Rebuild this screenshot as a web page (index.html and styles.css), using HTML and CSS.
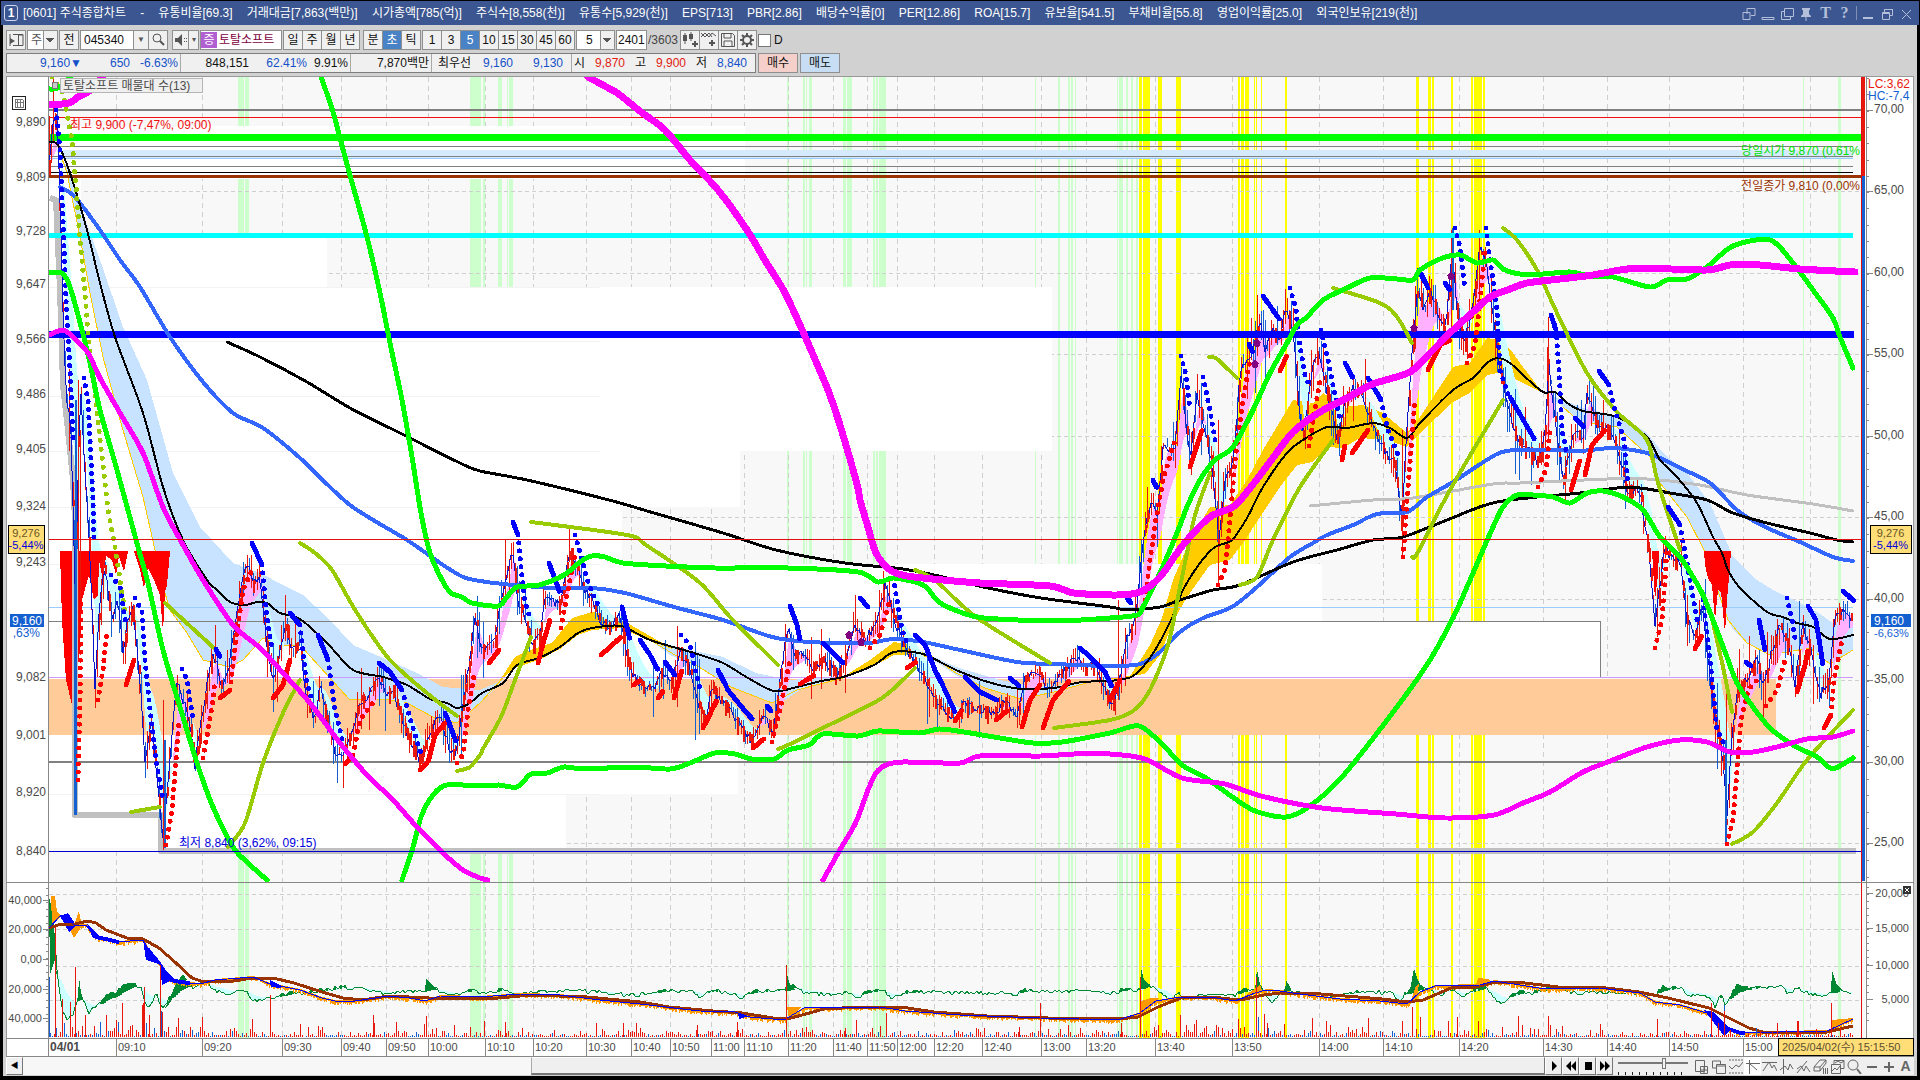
FILE: index.html
```html
<!DOCTYPE html>
<html lang="ko">
<head>
<meta charset="utf-8">
<title>[0601] 주식종합차트</title>
<link rel="stylesheet" href="styles.css">
</head>
<body>
<header class="titlebar">
  <span class="badge">1</span>
  <h1 class="info"><span>[0601] 주식종합차트</span><span>-</span><span>유통비율[69.3]</span><span>거래대금[7,863(백만)]</span><span>시가총액[785(억)]</span><span>주식수[8,558(천)]</span><span>유통수[5,929(천)]</span><span>EPS[713]</span><span>PBR[2.86]</span><span>배당수익률[0]</span><span>PER[12.86]</span><span>ROA[15.7]</span><span>유보율[541.5]</span><span>부채비율[55.8]</span><span>영업이익률[25.0]</span><span>외국인보유[219(천)]</span></h1>
  <div class="winbtns">
    <button aria-label="화면 복사"><svg width="14" height="14"><path d="M5 7V1.5h8v7H9M1 5.5h7v7H1z"/></svg></button>
    <button aria-label="숨기기"><svg width="14" height="14"><path d="M1 10.5h12v2H1z"/></svg></button>
    <button aria-label="창 분리"><svg width="14" height="14"><path d="M4.500 1.500h9v8h-9zM4 4.500H1.500v8h9V10"/></svg></button>
    <button aria-label="고정"><svg width="14" height="14"><path class="solid" d="M3 1h8v2h-1v4l2 2v1H2V9l2-2V3H3zM6.500 10h1v4h-1z"/></svg></button>
    <button class="serif" aria-label="글꼴">T</button>
    <button class="serif" aria-label="도움말">?</button>
    <i class="sep"></i>
    <button aria-label="최소화"><svg width="14" height="14"><path class="solid" d="M2 10h10v2H2z"/></svg></button>
    <button aria-label="이전 크기"><svg width="14" height="14"><path d="M4.500 5V2.500h8v6H10M4 2.500h9M2.500 5.500h7v7h-7zM2 6.500h8"/></svg></button>
    <button aria-label="닫기"><svg width="14" height="14"><path d="M3 3l9 9M12 3l-9 9"/></svg></button>
  </div>
</header>
<main class="client">
  <div class="toolbar">
    <button class="btn" aria-label="목록"><svg width="15" height="14"><path d="M4 1.500h10v11H4M1 1v12M9.500 2v10M9 2h5"/><path class="solid" d="M1 5l5 3-5 3z"/></svg></button>
    <select class="sel kind" aria-label="종류"><option>주</option></select>
    <button class="btn all">전</button>
    <span class="join"><input class="code" value="045340" aria-label="종목코드"><button class="btn caret" aria-label="종목 목록">▼</button><button class="btn" aria-label="검색"><svg width="14" height="14"><circle cx="6" cy="5" r="4"/><path class="bold" d="M9 8l4 4"/></svg></button></span>
    <span class="join speaker"><button class="btn spk" aria-label="소리"><svg width="12" height="12"><path class="solid" d="M0 4h3l4-4v12L3 8H0z"/><path d="M9.500 4v1M9.500 7v1M11.500 4v1M11.500 7v1"/></svg></button><button class="btn tiny" aria-label="소리 설정">▾</button></span>
    <span class="stock"><b>증</b>토탈소프트</span>
    <span class="join"><button class="btn">일</button><button class="btn">주</button><button class="btn">월</button><button class="btn">년</button></span>
    <span class="join unit"><button class="btn">분</button><button class="btn on">초</button><button class="btn">틱</button></span>
    <span class="join"><button class="btn">1</button><button class="btn">3</button><button class="btn on">5</button><button class="btn">10</button><button class="btn">15</button><button class="btn">30</button><button class="btn">45</button><button class="btn">60</button></span>
    <select class="sel num" aria-label="주기"><option>5</option></select>
    <input class="count" value="2401" aria-label="봉 개수">
    <span class="total">/3603</span>
    <span class="join"><button class="btn" aria-label="차트 유형"><svg width="16" height="16"><path class="solid" d="M1 3h4v6H1zM2.500 1h1v11h-1zM7 2h4v5H7zM8.500 0h1v9h-1zM12 9h2v2h2v2h-2v2h-2v-2h-2v-2h2z"/></svg></button><button class="btn" aria-label="지표 추가"><svg width="16" height="16"><path d="M0 5l4-4 4 4 3-4 4 3M0 1l4 4 4-4 3 4"/><path class="solid" d="M10 8h2v2h2v2h-2v2h-2v-2H8v-2h2z"/></svg></button><button class="btn" aria-label="저장"><svg width="16" height="16"><path d="M1.500 1.500h11l2 2v11h-13zM4 2v4h7V2M4 14V9h8v5"/></svg></button><button class="btn" aria-label="설정"><svg width="16" height="16"><circle class="bold" cx="8" cy="8" r="4"/><path class="bold" d="M8 1v3M8 12v3M1 8h3M12 8h3M3 3l2 2M11 11l2 2M13 3l-2 2M5 11l-2 2"/></svg></button></span>
    <label class="chk"><input type="checkbox">D</label>
  </div>
  <div class="quote">
    <div class="cells">
      <span class="dn">9,160▼</span><span class="dn">650</span><span class="dn end">-6.63%</span>
      <span>848,151</span><span class="dn">62.41%</span><span class="end">9.91%</span>
      <span class="end">7,870백만</span><span>최우선</span><span class="dn">9,160</span><span class="dn">9,130</span><span class="end"></span>
      <span>시</span><span class="up">9,870</span><span>고</span><span class="up">9,900</span><span>저</span><span class="dn">8,840</span>
    </div>
    <button class="trade buy">매수</button><button class="trade sell">매도</button>
  </div>
  <svg class="chart" id="chart" viewBox="6 76 1908 981" role="img" aria-label="토탈소프트 5초 차트"></svg>
  <div class="bottom">
    <button class="step" aria-label="왼쪽">◀</button>
    <div class="track"></div><div class="thumb"></div>
    <div class="play">
      <button class="step" aria-label="재생"><svg width="12" height="12"><path class="k" d="M4 1l5 5-5 5z"/></svg></button><button class="step" aria-label="뒤로"><svg width="12" height="12"><path class="k" d="M6 1v10L1 6zM11 1v10L6 6z"/></svg></button><button class="step" aria-label="정지"><svg width="12" height="12"><path class="k" d="M3 2h7v8H3z"/></svg></button><button class="step" aria-label="앞으로"><svg width="12" height="12"><path class="k" d="M1 1v10l5-5zM6 1v10l5-5z"/></svg></button>
    </div>
    <input class="slider" type="range" min="0" max="10" step="0.1" value="6.7" aria-label="속도">
    <div class="tools">
      <button aria-label="창 추가"><svg width="15" height="15"><path d="M1.500 1.500h9v11h-9zM6.500 7.500h7v7h-7zM10 7v8M6 11h8"/></svg></button><button aria-label="창 복사"><svg width="15" height="15"><path d="M5 9H1.500v-7h8V5M5.500 5.500h9v9h-9zM5 7h10"/></svg></button><button aria-label="범위"><svg width="15" height="15"><path d="M1 1h14M1 14h14" stroke-dasharray="2 1"/><path d="M1 7l3 3 4-4 3 2 4-5"/></svg></button><button class="on" aria-label="십자선"><svg width="15" height="15"><path d="M1 4.500h14M4.500 1v14M5 5l7 6"/></svg></button><button aria-label="추세선"><svg width="15" height="15"><path d="M0 3.500h15M1 12l6-9 3 6 2-3 3 6"/></svg></button><button aria-label="수직선"><svg width="15" height="15"><path d="M4.500 0v15M1 11l5-4 3 4 2-6 3 5"/></svg></button><button aria-label="선 그리기"><svg width="15" height="15"><path d="M1 14L11 2M1 10l4-3 3 5 2-5 4 6"/></svg></button><button aria-label="모두 지우기"><svg width="15" height="15"><path d="M1 8l6-7h6l-6 7zM1 8v4h6V8M7 12l6-8V1M10.500 9v6M12.500 9v6M14.500 9v6"/></svg></button><button aria-label="차트 이미지"><svg width="15" height="15"><path d="M4 5V1.500h10v8h-3M1.500 5.500h9v9h-9zM2 12l3-3 2 2 3-4M5 4l3-2 3 2 3-2"/></svg></button><button aria-label="확대경"><svg width="15" height="15"><circle cx="6" cy="6" r="5"/><path class="bold" d="M10 10l4 5"/></svg></button><button aria-label="축소"><svg width="15" height="15"><path class="solid" d="M3 7h10v2H3z"/></svg></button><button aria-label="확대"><svg width="15" height="15"><path class="solid" d="M3 7h4V3h2v4h4v2H9v4H7V9H3z"/></svg></button><button class="letter" aria-label="글자">A</button>
    </div>
  </div>
</main>
<script src="chart.js"></script>
</body>
</html>
```
FILE: styles.css
```css
* { box-sizing: border-box; }
body { margin: 0; padding-top: 1px; background: #000; font: 12px/16px "Liberation Sans", "Noto Sans CJK KR", sans-serif; color: #111; }
button, input, select { font: inherit; color: inherit; margin: 0; padding: 0; border-radius: 0; }
svg path, svg circle { fill: none; stroke: currentColor; }
svg .solid { fill: currentColor; stroke: none; }
svg .bold { stroke-width: 2; }

.titlebar { display: flex; align-items: center; height: 24px; margin: 0 1px; padding: 0 5px 0 3px; background: #3b5690; color: #fff; }
.badge { width: 14px; height: 16px; border: 1px solid #cfd8ee; border-radius: 3px; font-weight: bold; line-height: 14px; text-align: center; }
.info { display: flex; justify-content: space-between; width: 73%; margin: 0 0 0 5px; font-size: 12px; font-weight: normal; white-space: nowrap; }
.winbtns { display: flex; align-items: center; gap: 4px; margin-left: auto; color: #b4bfd9; }
.winbtns button { width: 15px; height: 18px; border: 0; background: none; line-height: 18px; }
.winbtns svg { display: block; margin-top: 1px; }
.winbtns .serif { font: bold 16px/18px "Liberation Serif", serif; }
.sep { width: 1px; height: 14px; background: #7f8fb5; }

.client { margin: 0 3px; padding: 5px 3px 1px 3px; background: #d1d1d1; }
.toolbar { display: flex; align-items: center; gap: 1px; height: 20px; }
.btn { display: inline-flex; align-items: center; justify-content: center; width: 20px; height: 20px; flex: none; border: 1px solid #8f8f8f; background: #f0f0f0; }
.btn svg { color: #555; }
.join { display: flex; }
.join .btn + .btn, .join input + .btn { margin-left: -1px; }
.btn.on { background: #4a82c6; color: #fff; }
.caret, .tiny { color: #555; font-size: 8px; }
.btn.caret { width: 16px; }
.btn.spk { width: 17px; }
.btn.tiny { width: 11px; }
.speaker { margin-left: 3px; }
.unit { margin-left: 2px; }
.sel { appearance: none; height: 20px; border: 1px solid #8f8f8f; padding-left: 3px; color: #555; background: linear-gradient(45deg, transparent 50%, #555 50%) right 7px center / 4px 4px no-repeat, linear-gradient(-45deg, transparent 50%, #555 50%) right 3px center / 4px 4px no-repeat, linear-gradient(#8f8f8f, #8f8f8f) right 13px top / 1px 20px no-repeat, linear-gradient(#f0f0f0, #f0f0f0) right / 13px 20px no-repeat, #fff; }
.kind { width: 31px; }
.num { width: 39px; padding-left: 9px; color: #111; }
.code, .count { height: 20px; border: 1px solid #8f8f8f; padding: 0 3px; background: #fff; }
.code { width: 54px; }
.count { width: 31px; padding: 0 1px; }
.stock { display: flex; align-items: center; width: 82px; height: 20px; border: 1px solid #8f8f8f; background: #fff; color: #800040; white-space: nowrap; overflow: hidden; }
.stock b { width: 16px; margin-right: 2px; background: #b060d0; color: #fff; font-weight: normal; text-align: center; flex: none; }
.total { width: 31px; color: #444; }
.chk { display: flex; align-items: center; gap: 3px; }
.chk input { appearance: none; width: 13px; height: 13px; border: 1px solid #777; background: #fff; }

.quote { display: flex; gap: 2px; margin: 3px 0; height: 20px; }
.cells { display: grid; grid-template-columns: 75px 48px 51px 68px 58px 44px 81px 39px 42px 50px 9px 13px 40px 21px 40px 21px 40px; width: 750px; height: 20px; border: 1px solid #7d7d7d; background: #f0f0f0; line-height: 18px; text-align: right; white-space: nowrap; }
.cells .end { border-right: 1px solid #a9a9a9; padding-right: 2px; }
.dn { color: #1450c8; }
.up { color: #e01b10; }
.trade { width: 40px; height: 20px; border: 1px solid #8f8f8f; }
.buy { background: #f5d0cb; }
.sell { background: #c6ddf3; }

.chart { display: block; width: 100%; height: auto; background: #fff; shape-rendering: crispEdges; }
.chart path, .chart polyline, .chart line, .chart polygon, .chart rect { fill: none; stroke: none; stroke-linejoin: round; }
.chart text { fill: #4a4a4a; font-size: 12px; }
.chart .time { font-size: 11px; }
.chart .bold-text { font-weight: bold; }

.bottom { display: flex; align-items: center; height: 18px; background: #efefef; }
.step { display: flex; align-items: center; justify-content: center; flex: none; width: 17px; height: 18px; border: 1px solid; border-color: #fff #777 #777 #fff; background: #efefef; font-size: 8px; color: #000; }
svg .k { fill: #000; stroke: none; }
.track { flex: 508 1 0; height: 18px; background: #f7f7f7; }
.thumb { flex: 1012 1 0; height: 18px; border: 1px solid; border-color: #fff #777 #777 #aaa; border-bottom-width: 2px; background: #efefef; }
.play { display: flex; }
.slider { appearance: none; flex: none; width: 70px; height: 18px; margin: 0 5px; background: linear-gradient(#777, #777) left 5px / 100% 2px no-repeat, repeating-linear-gradient(90deg, #222 0 1px, transparent 1px 7px) left bottom / 100% 3px no-repeat; }
.slider::-webkit-slider-thumb { appearance: none; width: 4px; height: 11px; margin-top: -5px; border: 1px solid #777; background: #f4f4f4; }
.tools { display: flex; color: #666; flex: none; }
.tools button { display: flex; align-items: center; justify-content: center; width: 17px; height: 18px; border: 0; background: none; color: #666; }
.tools .on { background: #fff; }
.tools .letter { font-weight: bold; font-size: 14px; }
```
FILE: chart.js
```js
const out = [];
const nums = s => s.trim().split(/\s+/).map(p => p.split(',').map(Number));
const rect = (x, y, w, h, fill, extra = '') => out.push(`<rect x="${x}" y="${y}" width="${w}" height="${h}" style="fill:${fill}${extra}"/>`);
const line = (pts, color, w, extra = '') => out.push(`<polyline points="${pts}" style="stroke:${color};stroke-width:${w};${extra}"/>`);
const path = (d, color, w, extra = '') => out.push(`<path d="${d}" style="stroke:${color};stroke-width:${w};${extra}"/>`);
const area = (pts, fill) => out.push(`<polygon points="${pts}" style="fill:${fill}"/>`);
const text = (x, y, s, color, anchor = 'start', cls = '') => out.push(`<text x="${x}" y="${y}" text-anchor="${anchor}" class="${cls}" style="${color ? 'fill:' + color : ''}">${s}</text>`);
// smooth curve through all points
const curve = (pts, color, w, extra) => {
  const p = nums(pts), g = i => p[Math.max(0, Math.min(p.length - 1, i))];
  let d = `M${p[0]}`;
  for (let i = 0; i < p.length - 1; i++) {
    const [a, b, c, e] = [g(i - 1), g(i), g(i + 1), g(i + 2)];
    d += `C${b[0] + (c[0] - a[0]) / 7},${b[1] + (c[1] - a[1]) / 7} ${c[0] - (e[0] - b[0]) / 7},${c[1] - (e[1] - b[1]) / 7} ${c}`;
  }
  path(d, color, w, extra);
};
let seed = 7;
const rnd = () => (seed = (seed * 16807) % 2147483647) / 2147483647;
const sampler = pts => x => {
  let i = 1;
  while (i < pts.length - 1 && pts[i][0] < x) i++;
  const [a, b] = pts[i - 1], [c, d] = pts[i];
  return b + (d - b) * Math.min(1, Math.max(0, (x - a) / (c - a || 1)));
};

// panel background and volume-profile blocks
rect(49, 77, 1817, 961, '#f8f8f8');

// session bands
const bands = '238,6 245,4 470,11 483,2 498,4 507,1 509,4 787,2 803,2 806,1 809,3 843,3 847,5 873,2 876,2 879,7 1035,1 1058,2 1068,2 1071,2 1075,1 1117,1 1119,4 1126,2 1131,2 1136,2 1803,1 1838,3';
const hot = '1139,3 1143,7 1158,4 1176,5 1238,2 1241,3 1245,4 1254,1 1256,1 1261,1 1285,2 1416,3 1428,3 1432,2 1451,2 1471,2 1474,8 1483,2';
nums(bands).forEach(([x, w]) => rect(x, 77, w, 961, '#ccffcc'));
nums(hot).forEach(([x, w]) => rect(x, 77, w, 961, '#ffff00'));

// grid
const times = [[116, '09:10'], [202, '09:20'], [282, '09:30'], [341, '09:40'], [386, '09:50'], [428, '10:00'], [485, '10:10'], [533, '10:20'], [586, '10:30'], [631, '10:40'], [670, '10:50'], [711, '11:00'], [744, '11:10'], [788, '11:20'], [833, '11:40'], [867, '11:50'], [897, '12:00'], [934, '12:20'], [982, '12:40'], [1041, '13:00'], [1086, '13:20'], [1155, '13:40'], [1232, '13:50'], [1319, '14:00'], [1383, '14:10'], [1459, '14:20'], [1543, '14:30'], [1607, '14:40'], [1669, '14:50'], [1743, '15:00'], [1810, '']];
times.forEach(([x]) => line(`${x}.5,77 ${x}.5,1038`, '#cfcfcf', 1, 'stroke-dasharray:5 4'));
const right = [[110, '70,00'], [191, '65,00'], [273, '60,00'], [354, '55,00'], [436, '50,00'], [517, '45,00'], [599, '40,00'], [680, '35,00'], [762, '30,00'], [843, '25,00']];
right.forEach(([y]) => line(`49,${y}.5 1861,${y}.5`, '#cfcfcf', 1, 'stroke-dasharray:4 3'));
[894, 929, 966, 1000].forEach(y => line(`49,${y}.5 1861,${y}.5`, '#cfcfcf', 1, 'stroke-dasharray:4 3'));

[[49, 126, 696, 53], [49, 179, 32, 58], [49, 237, 278, 50], [49, 287, 1003, 164], [49, 451, 691, 56], [49, 507, 573, 57], [49, 564, 1273, 57], [49, 621, 1552, 58], [49, 735, 689, 59], [49, 794, 517, 54]].forEach(b => rect(...b, '#fff'));
const left = [[122, '9,890'], [177, '9,809'], [231, '9,728'], [284, '9,647'], [339, '9,566'], [394, '9,486'], [449, '9,405'], [506, '9,324'], [562, '9,243'], [677, '9,082'], [735, '9,001'], [792, '8,920'], [851, '8,840']];
[287, 341, 396, 451, 507, 564, 794].forEach(y => line(`49,${y}.5 600,${y}.5`, '#f3f3f3', 1));
rect(49, 679, 1727, 56, '#ffcc99');

// trend clouds
area('53,142 67,167 83,213 100,260 123,327 147,380 173,473 200,527 233,563 260,573 283,585 303,595 327,617 353,645 383,658 417,673 443,687 480,690 503,680 480,703 457,723 433,717 407,703 383,699 350,700 320,667 300,645 280,645 263,638 243,660 230,667 203,660 187,633 170,610 165,593 155,550 143,497 120,420 103,357 90,293 80,237 67,173', '#c8e3ff');
area('650,640 690,650 723,657 756,673 790,680 843,676 800,690 785,700 772,703 731,687 699,667 670,655', '#c8e3ff');
area('915,648 956,667 1000,680 1030,686 1054,686 1090,682 1054,692 1021,699 985,688 956,675', '#c8e3ff');
area('1543,392 1583,408 1623,417 1647,433 1663,453 1687,473 1710,503 1733,557 1757,580 1773,590 1800,603 1817,612 1833,623 1853,620 1853,650 1830,664 1810,648 1770,655 1747,643 1733,630 1720,600 1704,550 1687,517 1660,483 1650,457 1617,427 1580,422 1563,407', '#c8e3ff');
area('500,680 515,657 530,650 552,643 572,618 592,612 617,617 650,636 675,650 650,641 621,628 592,630 578,635 560,649 539,660 517,667', '#ffcc00');
area('843,677 870,660 894,642 912,645 931,658 915,655 894,655 870,668', '#ffcc00');
area('1130,676 1150,645 1162,618 1173,580 1190,540 1210,507 1230,505 1247,480 1263,450 1293,400 1313,403 1323,393 1343,407 1363,405 1383,413 1407,433 1420,417 1453,367 1470,363 1487,338 1500,340 1513,353 1520,363 1543,393 1517,380 1503,372 1487,375 1470,393 1453,402 1420,433 1407,447 1387,440 1360,438 1343,448 1327,447 1313,462 1297,465 1280,487 1260,517 1243,543 1230,560 1210,565 1187,597 1175,618 1160,655 1145,674', '#ffcc00');
line('58,147 67,173 80,237 90,293 103,357 120,420 143,497 155,550 165,593 170,610 187,633 203,660 230,667 243,660 263,638 280,645 300,645 320,667 350,700 383,699 407,703 433,717 457,723 480,703 503,678', '#ffcc00', 1);
line('621,626 655,643 675,655 699,667 731,687 772,703 797,690 843,678', '#ffcc00', 1);
line('931,656 956,673 985,688 1021,699 1054,692 1090,682 1133,676', '#ffcc00', 1);
line('1563,407 1580,422 1617,427 1650,457 1660,483 1687,517 1704,550 1728,620 1747,643 1770,655 1810,648 1830,664 1853,650', '#ffcc00', 1);

// price path
const price = nums(`49,165 53,120 57,118 60,200 64,350 67,400 71,430 75,580 78,500 80,380 84,450 90,560 95,690 100,600 105,570 112,620 118,600 123,650 128,620 133,610 140,680 145,760 152,720 158,790 163,835 170,760 177,680 183,700 190,720 195,765 203,710 212,655 217,665 222,690 230,660 236,620 243,580 248,560 253,585 260,575 266,640 273,680 280,650 286,625 292,650 300,645 307,700 316,720 320,680 327,720 335,750 343,755 352,730 360,700 370,695 378,672 386,695 393,690 400,715 410,740 420,760 430,730 440,715 450,750 456,757 463,700 470,660 475,615 482,650 495,640 503,590 508,575 512,545 518,600 525,620 533,645 540,635 545,595 552,600 560,605 570,550 578,570 584,590 592,600 600,620 610,628 620,615 625,645 632,675 645,688 655,690 662,670 670,685 680,650 690,670 700,710 706,720 712,685 720,700 730,710 742,730 752,740 762,715 773,730 780,680 788,625 794,655 806,655 812,668 824,660 838,675 848,650 855,625 865,640 878,620 885,585 895,620 903,645 915,662 925,680 935,700 947,712 957,719 963,702 975,710 995,712 1005,702 1017,717 1025,680 1038,670 1047,690 1055,680 1068,668 1075,655 1085,668 1095,665 1108,698 1114,703 1120,680 1126,640 1135,620 1141,560 1147,515 1153,500 1157,520 1163,445 1175,450 1181,375 1186,420 1190,462 1197,395 1204,425 1212,465 1219,540 1225,480 1232,470 1236,430 1240,370 1250,360 1260,320 1265,350 1273,330 1280,340 1286,305 1293,330 1300,415 1303,435 1312,370 1319,350 1327,390 1338,440 1345,400 1353,387 1362,392 1370,420 1382,445 1395,465 1402,525 1406,440 1412,350 1418,285 1424,310 1430,290 1437,310 1446,330 1452,250 1458,320 1465,340 1472,310 1480,245 1486,262 1492,310 1500,370 1508,410 1518,440 1530,450 1538,463 1545,430 1549,365 1556,430 1563,480 1575,430 1583,440 1587,390 1597,425 1610,430 1617,445 1627,490 1640,490 1650,560 1655,625 1665,545 1672,560 1680,560 1687,620 1696,637 1702,605 1708,660 1715,720 1724,765 1727,820 1731,750 1737,690 1747,680 1757,660 1764,688 1772,650 1780,625 1790,650 1795,685 1803,625 1811,650 1820,695 1830,680 1834,615 1842,610 1853,620`);
const at = sampler(price);
let cyan = '', pink = '', fast = at(49), slow = at(49);
let up = '', down = '', body = '', steps = 'M49 165';
for (let x = 49; x < 1853; x += 1) {
  const y = at(x);
  fast += (y - fast) * 0.28;
  slow += (y - slow) * 0.075;
  const seg = `M${x} ${fast.toFixed(0)}V${slow.toFixed(0)}`;
  if (slow < fast - 2) cyan += seg; else if (slow > fast + 2) pink += seg;
}
for (let x = 49; x < 1853; x += 2) {
  const y = at(x), slope = at(x + 2) - at(x - 2);
  const amp = 7 + Math.min(18, Math.abs(slope) * 1.1) + (x > 1130 ? 4 : 0);
  const tail = rnd() < 0.12 ? 26 : 0;
  const top = y - rnd() * amp - (rnd() < 0.5 ? tail : 0), low = y + rnd() * amp + (rnd() < 0.5 ? tail : 0);
  const isUp = rnd() < (slope < 0 ? 0.85 : 0.38);
  const seg = `M${x}.5 ${top.toFixed(0)}V${low.toFixed(0)}`;
  if (isUp) up += seg; else down += seg;
  if (rnd() < 0.35) body += `M${x + 1} ${(y - 5).toFixed(0)}v${(6 + rnd() * 12).toFixed(0)}`;
  steps += `L${x} ${(y + (rnd() - 0.5) * 9).toFixed(0)}`;
}
path(cyan, '#ccffff', 1);
path(pink, '#ffb0ff', 1);

// horizontal levels
line('49,110 1862,110', '#808080', 2);
line('49,117.5 1862,117.5', '#f01010', 1);
rect(49, 134, 1813, 7, '#00ff00');
rect(62, 150, 1791, 9, '#d6eafd');
[146, 156, 166].forEach(y => line(`49,${y}.5 1853,${y}.5`, '#808080', 1));
line('49,158.5 1853,158.5', '#99ccff', 1);
line('49,172.5 1853,172.5', '#000', 1);
rect(49, 175, 1813, 3, '#993300');
line('49,607.5 1853,607.5', '#99ccff', 1);
line('49,621.5 1600.5,621.5 1600.5,677', '#808080', 1);
line('49,677.500 1853,677.500', '#cc99ff', 1);
line('49,762 1862,762', '#808080', 2);

// volume shapes hanging from the signal level
area('60,551 128,551 124,572 119,556 116,575 112,560 106,556 103,580 99,560 98,595 94,600 89,575 82,600 80,650 75,690 72,705 66,680 62,620', '#ff0000');
area('134,551 170,551 167,585 165,592 163,632 160,595 154,580 148,568 144,588 140,570', '#ff0000');
area('1704,551 1731,551 1730,566 1727,600 1725,633 1721,592 1718,590 1715,620 1712,585 1708,578 1705,565', '#ff0000');
area('1652,551 1659,551 1658,575 1655,600', '#ff0000');

// support steps
line('50,198 56,200 60,290 63,385 69,440 73,480 75,520 75,815 161,815 161,851 1856,851', '#c0c0c0', 6);
line('74.5,520 74.5,815', '#1560d0', 1);

path(down, '#1560d0', 1);
path(up, '#e8190c', 1);
path(steps, '#0a14c8', 1);
path(body, '#e8190c', 2);
path('M78.500 380V640M80.500 430V600M163.500 700V850M1118.500 600V700M1218.500 420V585M1402.500 430V555M1548.500 317V440M1726.500 680V843M1451.500 230V330M1479.500 230V300', '#e8190c', 1);
path('M75.500 400V815M164.500 740V848M1725.500 740V843M1452.500 228V310', '#1560d0', 2);

rect(49, 233, 1804, 5, '#00ffff');
rect(49, 331, 1805, 7, '#0000ff');

const MA = 'stroke-linecap:round';
curve('1310,506 1373,500 1413,498 1493,484 1520,483 1607,479 1647,479 1700,485 1747,495 1813,504 1853,511', '#c0c0c0', 3, MA);
curve('60,187 75,197 100,230 120,260 140,287 170,337 203,382 233,413 263,428 300,458 350,505 407,540 443,565 463,577 480,581 503,584 552,588 592,588 625,593 674,607 723,620 772,637 809,642 850,643 870,643 894,639 923,642 960,650 1017,662 1054,664 1110,666 1140,664 1160,652 1180,632 1203,618 1232,607 1257,587 1290,557 1313,543 1327,535 1353,525 1377,514 1407,512 1427,497 1453,482 1497,454 1520,450 1553,450 1580,451 1613,448 1643,452 1660,458 1680,468 1710,483 1737,510 1763,526 1800,542 1833,557 1853,561', '#3366ff', 4, MA);
curve('227,342 260,357 307,382 350,408 400,433 460,463 480,471 527,480 609,500 654,513 723,533 776,550 845,563 903,569 943,577 988,588 1041,598 1110,607 1127,610 1160,607 1180,600 1213,590 1240,585 1293,562 1337,550 1373,540 1403,537 1447,520 1497,502 1580,493 1617,488 1640,488 1670,493 1707,500 1733,513 1767,523 1810,533 1837,540 1853,542', '#000', 3, MA);
curve('50,142 58,145 70,173 87,230 100,283 115,337 143,413 163,487 183,540 207,580 217,590 230,602 245,605 257,602 267,603 280,613 300,619 327,643 353,670 383,677 407,685 430,699 447,703 457,708 470,703 482,693 503,683 517,665 539,658 560,647 578,633 592,628 621,626 650,640 694,653 723,663 748,678 774,691 797,687 821,681 843,677 874,665 894,652 923,654 956,670 988,682 1021,689 1054,688 1082,682 1110,681 1133,676 1152,655 1172,618 1183,590 1200,563 1215,547 1232,540 1247,518 1263,487 1287,453 1303,440 1327,427 1347,428 1373,423 1390,428 1407,438 1420,423 1453,390 1473,378 1487,363 1498,358 1510,363 1523,375 1543,392 1555,392 1567,403 1583,411 1617,417 1647,437 1660,460 1677,477 1697,503 1713,537 1722,553 1728,570 1740,588 1767,612 1783,617 1797,623 1813,627 1830,639 1853,635', '#000', 2, MA);

// long-wave segments
['165,603 215,649', '131,812 160,807', '300,543 315,553 332,570 357,613 390,660 433,698 457,716', '228,847 245,823 263,763 283,713 300,680', '457,771 470,767 480,755 484,747 501,717 515,680 531,637', '531,522 627,535 646,545 699,582 731,618 778,665', '778,749 788,745 829,725 882,698 915,668', '915,570 935,580 976,617 1050,663', '1054,728 1110,720 1133,711 1150,690 1168,645 1178,597 1187,553 1195,515 1210,473', '1209,357 1217,359 1237,378', '1240,585 1257,577 1273,540 1300,487 1333,440', '1333,288 1380,303 1397,317 1412,343', '1412,557 1418,552 1450,490 1503,400', '1503,228 1517,240 1537,270 1557,313 1587,373 1617,412 1647,440 1658,483 1680,550', '1713,623 1723,667 1732,712', '1732,844 1753,832 1777,803 1807,760 1853,710'].forEach(s => curve(s, '#99cc00', 4, MA));
line('52,77 63,93 72,140 76,187 80,240 85,293 88,333 97,413 108,510 115,547 125,613', '#99cc00', 5, MA + ';stroke-dasharray:0 9');

// stop-and-reverse dots
const dots = (list, color) => list.forEach(s => {
  const p = nums(s), h = Math.abs(p[p.length - 1][1] - p[0][1]), w = Math.abs(p[p.length - 1][0] - p[0][0]);
  line(s, color, 5, MA + `;stroke-dasharray:0 ${h > 45 && h > w * 2 ? 8 : 2}`);
});
dots(['56,110 60,150 63,220 66,300 70,370 73,440', '84,378 88,400 93,500 94,540', '111,575 120,587 126,625', '135,598 142,612 145,660 150,710 156,760 163,800', '182,669 187,680 193,720', '216,649 220,657', '252,543 262,565', '262,565 266,610 272,650', '290,613 300,625', '300,625 306,680 312,700', '318,635 328,660', '328,660 335,710 343,743', '379,663 390,672 402,690', '402,690 412,725 422,757', '445,713 450,725 456,742', '513,522 518,535', '518,535 521,567 525,603 531,620', '549,563 560,593', '575,535 582,560 588,582 600,610', '622,607 630,640', '640,640 650,655 658,670', '665,662 675,675', '681,635 690,645 700,690', '718,670 728,690 740,705 753,720', '767,706 771,711', '790,606 797,625 800,640', '823,643 843,663', '860,598 868,607', '892,570 897,600 902,630 907,643', '915,635 925,645 935,670', '935,670 945,690 955,712', '965,677 980,692 997,700', '1010,678 1020,687', '1080,648 1090,657 1105,672 1112,687', '1127,598 1131,603', '1153,480 1157,488', '1181,356 1186,375 1190,410', '1203,377 1210,410 1215,440', '1249,344 1253,353', '1263,296 1280,320', '1290,288 1296,310 1299,340 1305,375 1309,385', '1321,330 1328,360 1335,395 1340,420', '1345,363 1353,378', '1368,378 1381,400', '1381,400 1388,430 1400,460', '1419,270 1428,288', '1445,283 1450,290', '1455,228 1460,247 1465,290', '1486,228 1490,260 1497,310 1500,370 1510,400', '1510,397 1525,423 1535,440', '1551,315 1556,330', '1556,330 1559,370 1562,430 1567,455', '1575,418 1584,427', '1599,371 1609,385', '1609,385 1615,410 1624,440 1628,485', '1668,507 1680,525', '1680,525 1690,580 1697,620', '1703,600 1708,640 1712,680 1717,730 1723,742', '1746,662 1752,667', '1759,620 1765,650', '1787,598 1792,620 1796,645', '1808,606 1816,620', '1816,620 1823,665', '1843,591 1854,601'], '#0000ff');
dots(['78,780 80,700 81,600', '98,700 103,670 107,630', '126,685 134,660', '166,845 172,810 176,760 179,720', '203,758 208,730 213,700 215,680', '220,698 230,690', '230,690 236,640 243,590 252,570', '273,698 283,685 290,660', '345,764 353,755', '353,755 360,720 375,700', '420,770 428,762 435,735 445,723', '457,763 463,755 468,710 475,670', '489,663 499,650', '538,663 544,640 550,620', '561,628 566,600 575,555', '601,655 621,637', '634,685 640,680', '658,698 664,690', '674,698 682,670', '703,728 717,700', '753,748 765,738', '772,742 780,710 790,660', '800,684 815,675', '870,648 880,635 890,600', '907,668 916,662', '955,721 962,710', '996,720 1008,710', '1022,727 1030,700 1040,685', '1043,728 1053,700 1070,680', '1110,700 1120,680', '1145,600 1150,560 1155,525 1163,480 1175,440', '1190,467 1202,430', '1218,585 1225,570 1230,520 1235,460 1243,400 1250,360', '1280,371 1287,355', '1309,446 1315,410 1320,380', '1342,460 1345,445', '1352,453 1368,430', '1403,557 1407,500 1411,450 1415,400', '1428,370 1440,345 1450,340', '1467,363 1475,345 1480,300 1485,250', '1538,487 1546,470 1550,430', '1571,490 1580,460', '1585,475 1592,445 1605,430', '1655,648 1662,620 1665,580 1667,550', '1695,649 1702,635', '1727,844 1733,820 1737,770 1741,720 1748,690 1757,680', '1766,706 1777,690 1785,660', '1797,692 1805,665 1808,650', '1824,728 1831,715', '1831,715 1834,680 1842,640'], '#ff0000');
nums('849,635 861,642 1255,364 1257,343 1414,328 1451,276').forEach(([x, y]) => area(`${x},${y - 4} ${x + 4},${y - 1} ${x + 2},${y + 4} ${x - 2},${y + 4} ${x - 4},${y - 1}`, '#800080'));

// envelopes
['321,77 333,112 348,168 367,237 380,293 390,343 402,400 412,457 421,513 430,553 442,580 451,593 462,597 472,603 498,606 507,597 517,587 539,585 564,575 580,562 592,556 605,557 623,563 666,566 715,568 788,568 858,572 878,582 894,578 923,585 939,602 960,612 984,618 1054,621 1110,618 1137,615 1143,607 1160,573 1177,533 1187,507 1200,480 1215,460 1233,447 1253,410 1270,373 1287,343 1297,325 1307,317 1323,300 1347,288 1370,278 1397,279 1413,280 1420,270 1440,259 1460,255 1477,263 1493,260 1503,269 1520,274 1543,274 1570,272 1590,276 1613,277 1650,287 1667,280 1687,279 1707,267 1733,246 1770,240 1793,263 1813,290 1833,318 1840,337 1853,368', '49,89 58,88 70,77', '49,273 62,273 70,287 82,330 90,363 100,410 117,470 138,547 148,583 163,650 180,707 197,763 213,807 233,847 248,863 267,880', '402,880 413,847 421,817 433,795 447,785 480,786 499,785 517,787 531,774 547,773 564,767 584,769 633,767 670,769 690,763 715,753 735,754 752,759 774,759 788,750 809,745 823,734 858,736 878,731 919,733 939,729 964,732 1000,738 1033,743 1062,742 1110,733 1139,726 1163,745 1182,765 1206,778 1231,796 1255,811 1286,817 1310,806 1341,778 1371,741 1408,692 1430,660 1453,618 1467,587 1480,557 1493,527 1503,507 1517,495 1533,495 1553,497 1570,503 1587,493 1603,491 1623,497 1643,510 1660,537 1680,557 1693,577 1703,595 1713,620 1727,657 1737,683 1753,707 1770,728 1793,745 1817,757 1830,768 1838,767 1853,758'].forEach(s => curve(s, '#00ff00', 5, MA));
['49,105 69,103 78,97 88,92 102,77', '588,77 612,90 620,95 641,112 665,130 690,160 718,190 747,230 766,262 784,291 800,325 814,357 828,390 839,422 857,484 860,500 868,527 876,553 890,570 907,576 943,580 980,583 1050,586 1074,593 1117,595 1140,592 1160,577 1183,545 1210,517 1233,507 1247,492 1270,462 1293,432 1320,412 1347,398 1373,384 1410,372 1430,353 1453,330 1473,312 1490,297 1510,289 1527,283 1560,279 1593,275 1620,270 1643,268 1707,270 1730,265 1760,265 1800,269 1855,272'].forEach(s => curve(s, '#ff00ff', 7, MA));
['49,335 63,330 73,337 88,353 100,378 120,413 143,453 163,507 182,543 203,580 233,625 260,648 283,673 310,703 340,743 367,775 393,800 417,827 443,853 463,870 480,878 488,880', '823,880 841,848 856,822 868,790 876,773 886,765 903,762 960,763 980,756 1041,756 1074,754 1110,754 1145,759 1182,778 1225,784 1261,796 1322,808 1396,814 1445,818 1494,815 1523,803 1550,792 1583,772 1613,760 1647,747 1680,740 1707,742 1730,752 1753,752 1777,747 1807,739 1833,737 1853,731'].forEach(s => curve(s, '#ff00ff', 5, MA));
line('49,539.5 1862,539.5', '#e01010', 1);
line('49,851.500 1862,851.500', '#0000cc', 1);

// lower panel
const mid = nums('57,970 62,1010 68,1020 74,1012 79,992 84,1000 89,1012 98,1004 108,992 116,994 120,988 133,983 142,988 146,1008 150,1005 157,994 162,1010 170,996 178,982 184,980 194,988 204,980 215,990 226,994 244,989 254,1001 275,997 294,991 305,994 320,990 341,987 357,987 372,992 387,993 426,990 432,987 445,993 455,996 470,990 487,994 500,989 520,994 540,991 590,991 610,993 640,995 660,990 695,992 700,997 710,990 735,993 738,1000 750,992 770,990 785,990 793,986 805,993 830,995 845,992 858,998 865,991 885,990 890,998 910,991 960,993 1010,993 1016,996 1022,990 1040,992 1075,991 1118,993 1122,988 1138,990 1147,984 1158,990 1170,1002 1178,992 1184,1000 1200,994 1235,996 1240,989 1252,990 1260,986 1272,1002 1280,995 1287,985 1293,992 1320,994 1340,997 1355,992 1390,992 1399,1001 1407,992 1420,985 1440,996 1452,987 1462,997 1475,988 1485,987 1492,994 1501,1006 1510,996 1522,990 1530,994 1550,986 1565,992 1610,993 1655,995 1662,986 1680,988 1690,996 1710,996 1716,1008 1720,992 1725,1005 1737,985 1750,988 1780,986 1790,994 1798,988 1812,995 1828,994 1840,989 1853,994');
const mAt = sampler(mid);
let gl = 'M55 940L57 970', gf = '', cf = '', ema = 975;
for (let x = 57; x < 1853; x += 2) {
  const y = mAt(x) + (rnd() - 0.5) * 4;
  ema += (y - ema) * 0.14;
  gl += `L${x} ${y.toFixed(0)}`;
  if (y < ema - 2) gf += `M${x} ${y.toFixed(0)}V${ema.toFixed(0)}`; else cf += `M${x} ${y.toFixed(0)}V${ema.toFixed(0)}`;
}
path(cf, '#ccffff', 2);
path(gf, '#008833', 2);
path(gl, '#008833', 1);
area('49,897 51,905 54,925 56,958 54,962 50,975', '#008833');
['787,974 790,985 796,990 785,991', '1141,968 1144,980 1150,986 1140,990', '1257,969 1260,985 1255,990', '1414,968 1417,978 1422,988 1410,990', '1832,970 1836,983 1842,990 1831,993', '426,979 432,985 437,990 425,991', '175,985 183,974 187,980 178,986', '165,1008 176,985 181,984 168,1006', '78,998 79,977 82,1000', '1286,980 1290,987 1285,992'].forEach(s => area(s, '#008833'));
const brown = '49,928 61,924 75,924 88,921 96,923 106,930 127,938 143,939 159,948 176,963 192,978 204,982 233,981 253,978 273,978 294,983 322,992 343,998 363,1000 388,996 429,998 461,998 498,998 531,995 587,997 640,1002 669,1007 713,1011 742,1013 779,1019 791,1018 824,1009 860,1007 901,1007 934,1012 987,1016 1048,1018 1118,1019 1138,1017 1158,1007 1181,998 1211,997 1240,1000 1264,995 1280,993 1321,994 1382,999 1407,1002 1423,1000 1451,988 1476,987 1496,982 1525,983 1558,987 1598,987 1639,992 1668,998 1709,1008 1725,1016 1749,1028 1766,1033 1790,1032 1827,1032 1853,1026';
const lead = '49,928 61,915 68,918 74,925 86,925 95,937 110,940 118,942 143,940 150,952 160,964 170,980 180,982 200,984 215,980 253,977 270,984 300,990 322,998 335,1001 355,1001 388,996 410,998 425,1001 440,996 480,997 520,994 560,995 600,1000 640,1004 700,1011 735,1012 750,1017 784,1020 804,1008 880,1007 905,1011 960,1015 1040,1018 1118,1020 1140,1013 1156,1001 1180,997 1211,997 1235,1001 1255,993 1266,990 1280,991 1300,994 1340,999 1380,1001 1407,1004 1420,992 1435,986 1480,985 1494,981 1520,985 1545,989 1600,988 1640,993 1655,1002 1680,1005 1710,1014 1728,1029 1740,1033 1780,1032 1827,1031 1853,1019';
const lAt = sampler(nums(lead)), bAt = sampler(nums(brown));
let or = '', bl = '';
for (let x = 75; x < 1853; x += 1) {
  const l = lAt(x), b = bAt(x);
  or += `M${x} ${(l - 1).toFixed(0)}v${(2 + rnd() * 3).toFixed(0)}`;
  if (l > b + 7) bl += `M${x} ${(l - 2).toFixed(0)}v4`;
}
path(or, '#ff9900', 1);
path(bl, '#0000ff', 1);
['51,896 55,896 57,912 61,916 52,925', '75,922 79,911 82,926 74,938 70,930', '787,1007 802,1007 789,1019', '1141,1001 1150,998 1160,998 1141,1015', '1411,1001 1416,986 1419,984 1417,998 1407,1003', '1831,1020 1853,1018 1833,1031', '1476,985 1478,978 1488,979 1492,983', '1243,997 1256,988 1260,984 1262,990'].forEach(s => area(s, '#ff9900'));
['60,916 68,913 76,925 69,932', '87,924 92,928 101,938 93,938', '143,940 146,945 159,964 146,960', '160,964 174,979 162,985', '270,980 282,986 280,988 271,987', '738,1012 748,1016 739,1019', '1704,1010 1713,1012 1731,1030 1724,1036'].forEach(s => area(s, '#0000ff'));
line(brown, '#993300', 3);
line(lead, '#0000ff', 1);
let vr = '', vb = '';
for (let x = 50; x < 1853; x += 2) {
  const busy = x < 170 ? 3 : x < 240 ? 1.6 : x > 1150 && x < 1560 ? 1.7 : 1;
  const h = Math.min(34, 1 - Math.log(rnd() + 0.001) * 2.6 * busy);
  const seg = `M${x}.5 1037v-${h.toFixed(0)}`;
  if (rnd() < 0.62) vr += seg; else vb += `M${x}.5 1037v-${(h * 0.5).toFixed(0)}`;
}
nums('55,110 62,38 75,70 70,35 85,22 122,20 143,34 144,50 149,22 160,72 162,25 202,20 252,18 270,42 300,13 318,11 373,22 374,14 426,21 454,12 505,15 623,14 697,12 737,15 786,72 845,9 856,17 886,24 1019,10 1040,34 1121,14 1140,60 1158,12 1180,22 1216,12 1238,18 1256,60 1267,14 1284,13 1368,19 1402,16 1412,30 1420,20 1448,16 1457,20 1478,16 1518,21 1548,21 1600,13 1657,18 1711,34 1724,26 1777,14 1797,16 1831,34').forEach(([x, h]) => vr += `M${x}.5 1037v-${h}`);
nums('49,60 64,14 118,15 161,26 146,14 1258,20 1724,32').forEach(([x, h]) => vb += `M${x}.5 1037v-${h}`);
path(vb, '#1560d0', 1);
path(vr, '#e8190c', 1);

// axes
rect(6, 77, 43, 979, '#fff');
rect(1865, 77, 49, 961, '#fff');
rect(6, 1038, 1908, 18, '#fff');
rect(1861, 77, 1, 961, '#e01010');
rect(1862, 77, 3, 99, '#e8190c');
rect(1862, 176, 3, 705, '#1560d0');
rect(6, 76, 1908, 1, '#999');
rect(6, 76, 1, 981, '#999');
rect(1913, 76, 1, 981, '#999');
rect(48, 76, 1, 981, '#888');
rect(1866, 76, 1, 962, '#888');
[882, 1038, 1056].forEach(y => rect(6, y, 1908, 1, '#888'));
for (let i = 0; i < 50; i++) rect(1867, Math.round(78 + i * 16.3), 2, 1, '#888');
for (let i = 0; i < 20; i++) { rect(46, 888 + i * 7, 2, 1, '#888'); rect(1867, 887 + i * 7, 2, 1, '#888'); }
left.forEach(([y, s]) => text(46, y + 4, s, '', 'end'));
right.forEach(([y, s]) => { rect(1867, y, 6, 1, '#888'); text(1874, y + 3, s); });
[[900, '40,000'], [929, '20,000'], [959, '0,00'], [989, '20,000'], [1018, '40,000']].forEach(([y, s]) => { rect(43, y, 5, 1, '#888'); text(42, y + 4, s, '', 'end', 'time'); });
[[893, '20,000'], [928, '15,000'], [965, '10,000'], [999, '5,000']].forEach(([y, s]) => { rect(1867, y, 6, 1, '#888'); text(1909, y + 4, s, '', 'end', 'time'); });
times.forEach(([x, s]) => { rect(x, 1038, 1, 18, '#888'); text(x + 2, 1051, s, '', 'start', 'time'); });
text(50, 1051, '04/01', '', 'start', 'bold-text');

// captions
rect(60.5, 78.5, 142, 14, '#efefef', ';stroke:#b5b5b5');
rect(52.5, 82.5, 5, 6, '#c8c8c8', ';stroke:#777');
text(63, 90, '토탈소프트 매물대 수(13)');
text(70, 129, '최고 9,900 (-7,47%, 09:00)', '#f01010');
text(179, 847, '최저 8,840 (3,62%, 09:15)', '#0000dd');
text(1860, 155, '당일시가 9,870 (0,61%', '#00e000', 'end');
text(1860, 190, '전일종가 9,810 (0,00%', '#993300', 'end');
text(1868, 88, 'LC:3,62', '#e8190c');
text(1868, 100, 'HC:-7,4', '#1560d0');

// price tags
[[8, 36], [1870, 41]].forEach(([x, w]) => {
  rect(x + 0.5, 525.5, w, 28, '#ffdd77', ';stroke:#000');
  text(x + w / 2, 537, '9,276', '#665522', 'middle', 'time');
  text(x + w / 2, 549, '-5,44%', '#0000dd', 'middle', 'time');
});
rect(10, 614, 34, 13, '#1560d0');
rect(1871, 614, 40, 13, '#1560d0');
text(27, 625, '9,160', '#fff', 'middle');
text(1889, 625, '9,160', '#fff', 'middle');
text(40, 637, ',63%', '#1560d0', 'end');
text(1874, 637, '-6,63%', '#1560d0', 'start', 'time');
rect(1778.5, 1038.5, 135, 17, '#ffdd77', ';stroke:#000');
text(1782, 1051, '2025/04/02(수) 15:15:50', '#5c5030', 'start', 'time');
rect(12.5, 96.5, 13, 13, '#fff', ';stroke:#222');
path('M15 99.500h8v8h-8zM15 102.500h8M17.500 100v7M20.500 100v7', '#777', 1);
rect(1903, 886, 8, 8, '#333');
path('M1905 888l4 4M1909 888l-4 4', '#fff', 1);

document.getElementById('chart').innerHTML = out.join('');
```
